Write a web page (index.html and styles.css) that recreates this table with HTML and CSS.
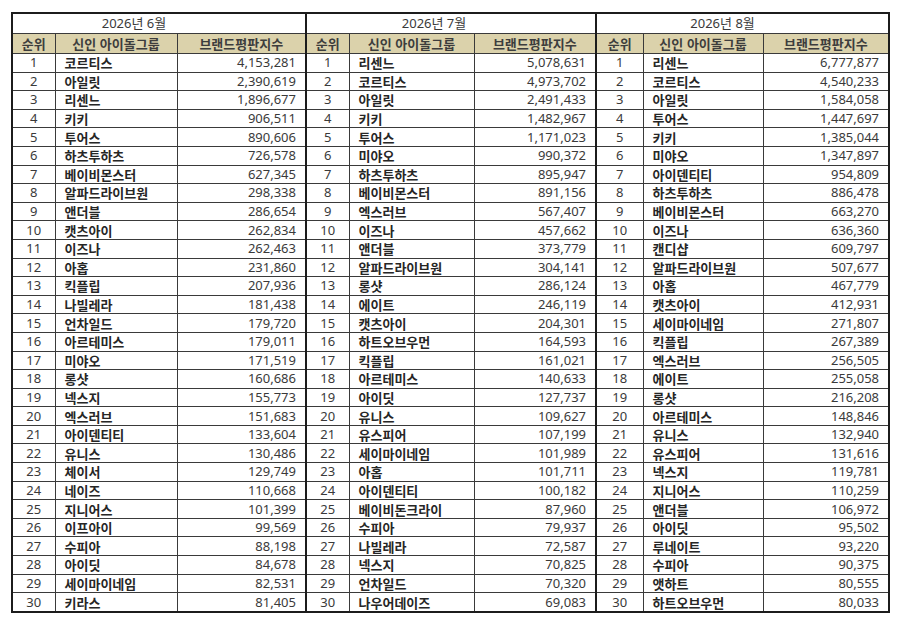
FILE: index.html
```html
<!DOCTYPE html>
<html lang="ko">
<head>
<meta charset="utf-8">
<link rel="stylesheet" href="styles.css">
</head>
<body>
<div class="page">
<table class="rank">
<colgroup>
<col class="c-r1"><col class="c-g1"><col class="c-s1">
<col class="c-r2"><col class="c-g2"><col class="c-s2">
<col class="c-r3"><col class="c-g3"><col class="c-s3">
</colgroup>
<thead>
<tr class="title">
<th colspan="3" class="t1">2026년 6월</th>
<th colspan="3" class="sep t2">2026년 7월</th>
<th colspan="3" class="sep t3">2026년 8월</th>
</tr>
<tr class="head">
<th>순위</th><th>신인 아이돌그룹</th><th>브랜드평판지수</th>
<th class="sep">순위</th><th>신인 아이돌그룹</th><th>브랜드평판지수</th>
<th class="sep">순위</th><th>신인 아이돌그룹</th><th>브랜드평판지수</th>
</tr>
</thead>
<tbody>
<tr><td class="n">1</td><td class="g">코르티스</td><td class="v">4,153,281</td><td class="n sep">1</td><td class="g">리센느</td><td class="v">5,078,631</td><td class="n sep">1</td><td class="g">리센느</td><td class="v">6,777,877</td></tr>
<tr><td class="n">2</td><td class="g">아일릿</td><td class="v">2,390,619</td><td class="n sep">2</td><td class="g">코르티스</td><td class="v">4,973,702</td><td class="n sep">2</td><td class="g">코르티스</td><td class="v">4,540,233</td></tr>
<tr><td class="n">3</td><td class="g">리센느</td><td class="v">1,896,677</td><td class="n sep">3</td><td class="g">아일릿</td><td class="v">2,491,433</td><td class="n sep">3</td><td class="g">아일릿</td><td class="v">1,584,058</td></tr>
<tr><td class="n">4</td><td class="g">키키</td><td class="v">906,511</td><td class="n sep">4</td><td class="g">키키</td><td class="v">1,482,967</td><td class="n sep">4</td><td class="g">투어스</td><td class="v">1,447,697</td></tr>
<tr><td class="n">5</td><td class="g">투어스</td><td class="v">890,606</td><td class="n sep">5</td><td class="g">투어스</td><td class="v">1,171,023</td><td class="n sep">5</td><td class="g">키키</td><td class="v">1,385,044</td></tr>
<tr><td class="n">6</td><td class="g">하츠투하츠</td><td class="v">726,578</td><td class="n sep">6</td><td class="g">미야오</td><td class="v">990,372</td><td class="n sep">6</td><td class="g">미야오</td><td class="v">1,347,897</td></tr>
<tr><td class="n">7</td><td class="g">베이비몬스터</td><td class="v">627,345</td><td class="n sep">7</td><td class="g">하츠투하츠</td><td class="v">895,947</td><td class="n sep">7</td><td class="g">아이덴티티</td><td class="v">954,809</td></tr>
<tr><td class="n">8</td><td class="g">알파드라이브원</td><td class="v">298,338</td><td class="n sep">8</td><td class="g">베이비몬스터</td><td class="v">891,156</td><td class="n sep">8</td><td class="g">하츠투하츠</td><td class="v">886,478</td></tr>
<tr><td class="n">9</td><td class="g">앤더블</td><td class="v">286,654</td><td class="n sep">9</td><td class="g">엑스러브</td><td class="v">567,407</td><td class="n sep">9</td><td class="g">베이비몬스터</td><td class="v">663,270</td></tr>
<tr><td class="n">10</td><td class="g">캣츠아이</td><td class="v">262,834</td><td class="n sep">10</td><td class="g">이즈나</td><td class="v">457,662</td><td class="n sep">10</td><td class="g">이즈나</td><td class="v">636,360</td></tr>
<tr><td class="n">11</td><td class="g">이즈나</td><td class="v">262,463</td><td class="n sep">11</td><td class="g">앤더블</td><td class="v">373,779</td><td class="n sep">11</td><td class="g">캔디샵</td><td class="v">609,797</td></tr>
<tr><td class="n">12</td><td class="g">아홉</td><td class="v">231,860</td><td class="n sep">12</td><td class="g">알파드라이브원</td><td class="v">304,141</td><td class="n sep">12</td><td class="g">알파드라이브원</td><td class="v">507,677</td></tr>
<tr><td class="n">13</td><td class="g">킥플립</td><td class="v">207,936</td><td class="n sep">13</td><td class="g">롱샷</td><td class="v">286,124</td><td class="n sep">13</td><td class="g">아홉</td><td class="v">467,779</td></tr>
<tr><td class="n">14</td><td class="g">나빌레라</td><td class="v">181,438</td><td class="n sep">14</td><td class="g">에이트</td><td class="v">246,119</td><td class="n sep">14</td><td class="g">캣츠아이</td><td class="v">412,931</td></tr>
<tr><td class="n">15</td><td class="g">언차일드</td><td class="v">179,720</td><td class="n sep">15</td><td class="g">캣츠아이</td><td class="v">204,301</td><td class="n sep">15</td><td class="g">세이마이네임</td><td class="v">271,807</td></tr>
<tr><td class="n">16</td><td class="g">아르테미스</td><td class="v">179,011</td><td class="n sep">16</td><td class="g">하트오브우먼</td><td class="v">164,593</td><td class="n sep">16</td><td class="g">킥플립</td><td class="v">267,389</td></tr>
<tr><td class="n">17</td><td class="g">미야오</td><td class="v">171,519</td><td class="n sep">17</td><td class="g">킥플립</td><td class="v">161,021</td><td class="n sep">17</td><td class="g">엑스러브</td><td class="v">256,505</td></tr>
<tr><td class="n">18</td><td class="g">롱샷</td><td class="v">160,686</td><td class="n sep">18</td><td class="g">아르테미스</td><td class="v">140,633</td><td class="n sep">18</td><td class="g">에이트</td><td class="v">255,058</td></tr>
<tr><td class="n">19</td><td class="g">넥스지</td><td class="v">155,773</td><td class="n sep">19</td><td class="g">아이딧</td><td class="v">127,737</td><td class="n sep">19</td><td class="g">롱샷</td><td class="v">216,208</td></tr>
<tr><td class="n">20</td><td class="g">엑스러브</td><td class="v">151,683</td><td class="n sep">20</td><td class="g">유니스</td><td class="v">109,627</td><td class="n sep">20</td><td class="g">아르테미스</td><td class="v">148,846</td></tr>
<tr><td class="n">21</td><td class="g">아이덴티티</td><td class="v">133,604</td><td class="n sep">21</td><td class="g">유스피어</td><td class="v">107,199</td><td class="n sep">21</td><td class="g">유니스</td><td class="v">132,940</td></tr>
<tr><td class="n">22</td><td class="g">유니스</td><td class="v">130,486</td><td class="n sep">22</td><td class="g">세이마이네임</td><td class="v">101,989</td><td class="n sep">22</td><td class="g">유스피어</td><td class="v">131,616</td></tr>
<tr><td class="n">23</td><td class="g">체이서</td><td class="v">129,749</td><td class="n sep">23</td><td class="g">아홉</td><td class="v">101,711</td><td class="n sep">23</td><td class="g">넥스지</td><td class="v">119,781</td></tr>
<tr><td class="n">24</td><td class="g">네이즈</td><td class="v">110,668</td><td class="n sep">24</td><td class="g">아이덴티티</td><td class="v">100,182</td><td class="n sep">24</td><td class="g">지니어스</td><td class="v">110,259</td></tr>
<tr><td class="n">25</td><td class="g">지니어스</td><td class="v">101,399</td><td class="n sep">25</td><td class="g">베이비돈크라이</td><td class="v">87,960</td><td class="n sep">25</td><td class="g">앤더블</td><td class="v">106,972</td></tr>
<tr><td class="n">26</td><td class="g">이프아이</td><td class="v">99,569</td><td class="n sep">26</td><td class="g">수피아</td><td class="v">79,937</td><td class="n sep">26</td><td class="g">아이딧</td><td class="v">95,502</td></tr>
<tr><td class="n">27</td><td class="g">수피아</td><td class="v">88,198</td><td class="n sep">27</td><td class="g">나빌레라</td><td class="v">72,587</td><td class="n sep">27</td><td class="g">루네이트</td><td class="v">93,220</td></tr>
<tr><td class="n">28</td><td class="g">아이딧</td><td class="v">84,678</td><td class="n sep">28</td><td class="g">넥스지</td><td class="v">70,825</td><td class="n sep">28</td><td class="g">수피아</td><td class="v">90,375</td></tr>
<tr><td class="n">29</td><td class="g">세이마이네임</td><td class="v">82,531</td><td class="n sep">29</td><td class="g">언차일드</td><td class="v">70,320</td><td class="n sep">29</td><td class="g">앳하트</td><td class="v">80,555</td></tr>
<tr><td class="n">30</td><td class="g">키라스</td><td class="v">81,405</td><td class="n sep">30</td><td class="g">나우어데이즈</td><td class="v">69,083</td><td class="n sep">30</td><td class="g">하트오브우먼</td><td class="v">80,033</td></tr>
</tbody>
</table>
</div>
</body>
</html>
```
FILE: styles.css
```css
html, body {
  margin: 0;
  padding: 0;
  background: #ffffff;
}

body {
  font-family: "Noto Sans", "Noto Sans CJK KR", sans-serif;
  color: #333333;
}

.page {
  padding: 12px 0 0 11px;
}

.rank {
  border-collapse: collapse;
  table-layout: fixed;
  width: 879px;
  border: 2px solid #1c1c1c;
  font-size: 13px;
  line-height: 1;
}

.c-r1 { width: 43px; }
.c-g1 { width: 122px; }
.c-s1 { width: 129px; }
.c-r2 { width: 43px; }
.c-g2 { width: 125px; }
.c-s2 { width: 122px; }
.c-r3 { width: 47px; }
.c-g3 { width: 120px; }
.c-s3 { width: 126px; }

.rank th,
.rank td {
  border: 1px solid #3a3a3a;
  padding: 0;
  white-space: nowrap;
  overflow: hidden;
}

.rank .sep {
  border-left: 2px solid #1c1c1c;
}

.title th {
  height: 19px;
  font-weight: normal;
  color: #3a3a3a;
  text-align: center;
  background: #ffffff;
}

.rank .t1 { padding-right: 50px; }
.rank .t2 { padding-right: 34px; }
.rank .t3 { padding-right: 40px; }

.head th {
  height: 19px;
  background: #dbd2ab;
  font-family: "Noto Sans CJK KR", sans-serif;
  font-weight: bold;
  color: #3d3d3d;
  text-align: center;
}

.rank tbody td {
  height: 17.6px;
}

.n {
  text-align: center;
  color: #3a3a3a;
}

.g {
  text-align: left;
  padding-left: 9px !important;
  font-family: "Noto Sans CJK KR", sans-serif;
  font-weight: bold;
  color: #262626;
}

.v {
  text-align: right;
  padding-right: 9px !important;
  color: #3a3a3a;
}
```
